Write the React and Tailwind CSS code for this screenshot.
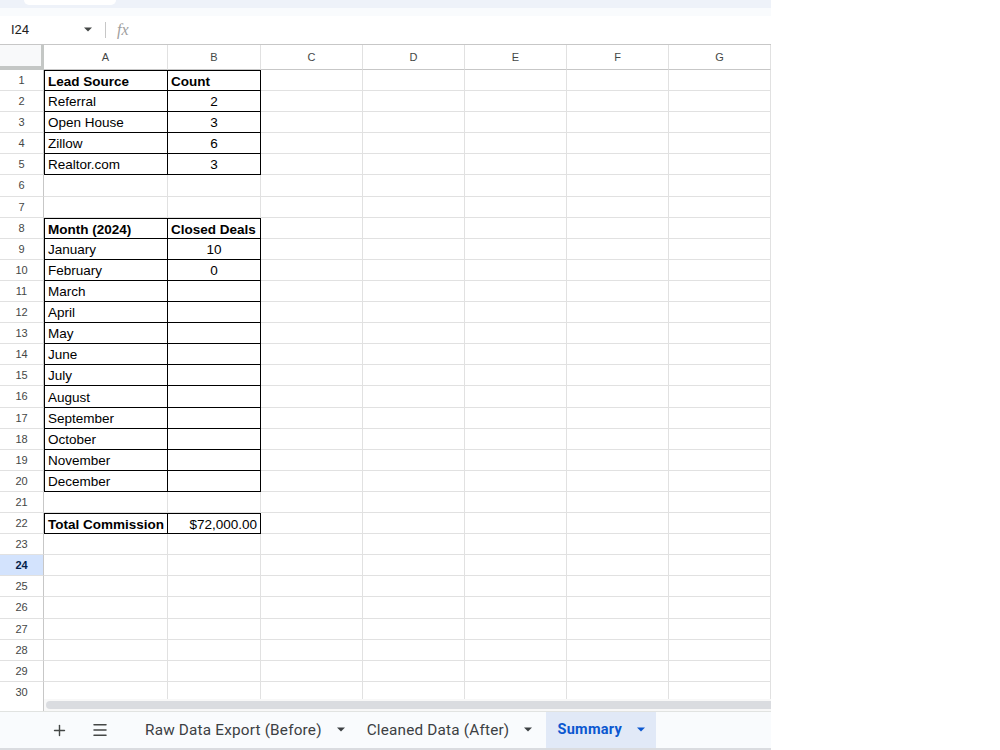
import { Plus, Menu } from 'lucide-react';

const cols = [
    { label: 'A', w: 'w-[124px]' },
    { label: 'B', w: 'w-[93px]' },
    { label: 'C', w: 'w-[102px]' },
    { label: 'D', w: 'w-[102px]' },
    { label: 'E', w: 'w-[102px]' },
    { label: 'F', w: 'w-[102px]' },
    { label: 'G', w: 'w-[102px]' },
];

// [A, B, bold A, bold B, align of B]
const data = {
    1: ['Lead Source', 'Count', true, true, 'left'],
    2: ['Referral', '2', false, false, 'center'],
    3: ['Open House', '3', false, false, 'center'],
    4: ['Zillow', '6', false, false, 'center'],
    5: ['Realtor.com', '3', false, false, 'center'],
    8: ['Month (2024)', 'Closed Deals', true, true, 'left'],
    9: ['January', '10', false, false, 'center'],
    10: ['February', '0', false, false, 'center'],
    11: ['March', '', false, false, 'center'],
    12: ['April', '', false, false, 'center'],
    13: ['May', '', false, false, 'center'],
    14: ['June', '', false, false, 'center'],
    15: ['July', '', false, false, 'center'],
    16: ['August', '', false, false, 'center'],
    17: ['September', '', false, false, 'center'],
    18: ['October', '', false, false, 'center'],
    19: ['November', '', false, false, 'center'],
    20: ['December', '', false, false, 'center'],
    22: ['Total Commission', '$72,000.00', true, false, 'right'],
};

const Caret = ({ className }) => (
    <svg width="10" height="6" viewBox="0 0 10 6" className={className}>
        <path d="M0 0h10L5 5z" fill="currentColor" />
    </svg>
);

const Row = ({ n }) => {
    const d = data[n];
    const h = n % 10 === 6 ? 'h-[22px]' : 'h-[21px]';
    const sel = n === 24;
    return (
        <div className={`flex ${h}`}>
            <div className={`w-[44px] shrink-0 flex items-center justify-center text-[11px] border-r border-[#c7c7c7] border-b border-b-[#e1e1e1] ${sel ? 'bg-[#d3e3fd] text-[#041e49] font-bold' : 'text-[#444746]'}`}>
                {n}
            </div>
            {cols.map((c, i) => {
                let cls = 'border-r border-b border-[#e1e1e1]';
                let content = null;
                if (d && i < 2) {
                    cls = 'border-r border-b border-black';
                    const align = i === 0 ? 'justify-start' : d[4] === 'center' ? 'justify-center' : d[4] === 'right' ? 'justify-end' : 'justify-start';
                    const bold = i === 0 ? d[2] : d[3];
                    content = (
                        <div className={`flex h-full items-center pt-[2px] px-[3px] ${align} ${bold ? 'font-bold' : ''}`}>{d[i]}</div>
                    );
                    if (!data[n - 1]) cls += ' border-t';
                    if (i === 0) cls += ' border-l';
                }
                return (
                    <div key={c.label} className={`${c.w} shrink-0 ${cls} text-[13.5px] text-black leading-none overflow-hidden whitespace-nowrap`}>
                        {content}
                    </div>
                );
            })}
        </div>
    );
};

const App = () => {
    const rows = Array.from({ length: 30 }, (_, i) => i + 1);
    return (
        <div className="w-[1000px] h-[750px] bg-white overflow-hidden" style={{ fontFamily: '"Liberation Sans", Arial, sans-serif' }}>
            <div className="w-[771px] h-[750px] flex flex-col">
                {/* top strip */}
                <div className="h-[8px] bg-[#eef2f9] shrink-0 relative">
                    <div className="absolute left-[24px] top-0 w-[92px] h-[5px] bg-white rounded-b-[8px]"></div>
                </div>
                <div className="h-[8px] bg-[#f9fbfd] shrink-0"></div>

                {/* formula bar */}
                <div className="h-[29px] shrink-0 flex items-center border-b border-[#c7c7c7] bg-white">
                    <div className="w-[100px] flex items-center pl-[11px] pr-[8px] justify-between text-[13px] text-[#1f1f1f]" style={{ fontFamily: 'Roboto, sans-serif' }}>
                        <span>I24</span>
                        <Caret className="text-[#444746] w-[8px]" />
                    </div>
                    <div className="w-px h-[16px] bg-[#c7c7c7] ml-[5px]"></div>
                    <span className="ml-[11px] text-[16px] italic text-[#a0a0a0]" style={{ fontFamily: '"Liberation Serif", serif' }}>fx</span>
                </div>

                {/* column headers */}
                <div className="flex h-[25px] shrink-0 bg-[#f8f9fa]">
                    <div className="w-[44px] shrink-0 bg-[#f8f9fa] border-r-[3px] border-b-[4px] border-[#c4c7c5]"></div>
                    {cols.map((c) => (
                        <div key={c.label} className={`${c.w} shrink-0 flex items-center justify-center text-[11px] text-[#444746] border-r border-[#e1e1e1] border-b border-b-[#c7c7c7] bg-white`}>
                            {c.label}
                        </div>
                    ))}
                </div>

                {/* grid */}
                <div className="flex-1 overflow-hidden">
                    {rows.map((n) => (
                        <Row key={n} n={n} />
                    ))}
                </div>

                {/* horizontal scrollbar */}
                <div className="h-[12px] shrink-0 flex bg-white">
                    <div className="w-[44px] border-r border-[#c7c7c7]"></div>
                    <div className="flex-1 flex items-center bg-[#f8f8f8] pl-[2px]">
                        <div className="h-[8px] w-full bg-[#dadce0] rounded-l-full"></div>
                    </div>
                </div>

                {/* sheet tabs */}
                <div className="h-[39px] shrink-0 flex items-stretch bg-[#f9fbfd] border-t border-[#e1e3e1] border-b-[2px] border-b-[#dadce0] text-[15.3px] text-[#3c4043]" style={{ fontFamily: 'Roboto, sans-serif' }}>
                    <div className="w-[46px]"></div>
                    <div className="w-[26px] flex items-center justify-center">
                        <Plus size={17} strokeWidth={2} className="text-[#444746]" />
                    </div>
                    <div className="w-[28px] ml-[14px] flex items-center justify-center">
                        <Menu size={18} strokeWidth={2} className="text-[#444746]" />
                    </div>
                    <div className="ml-[3px] pl-[28px] pr-[20px] flex items-center gap-[15px] tracking-[0.2px]">
                        <span>Raw Data Export (Before)</span>
                        <Caret className="w-[8px]" />
                    </div>
                    <div className="pl-[2px] flex items-center gap-[15px] tracking-[0.2px]">
                        <span>Cleaned Data (After)</span>
                        <Caret className="w-[8px]" />
                    </div>
                    <div className="ml-[14px] pl-[11px] w-[110px] flex items-center gap-[15px] bg-[#e1e9f7] text-[#0b57d0] text-[14.5px] font-bold tracking-[0.3px]">
                        <span>Summary</span>
                        <Caret className="w-[8px]" />
                    </div>
                </div>
            </div>
        </div>
    );
};

export default App;
